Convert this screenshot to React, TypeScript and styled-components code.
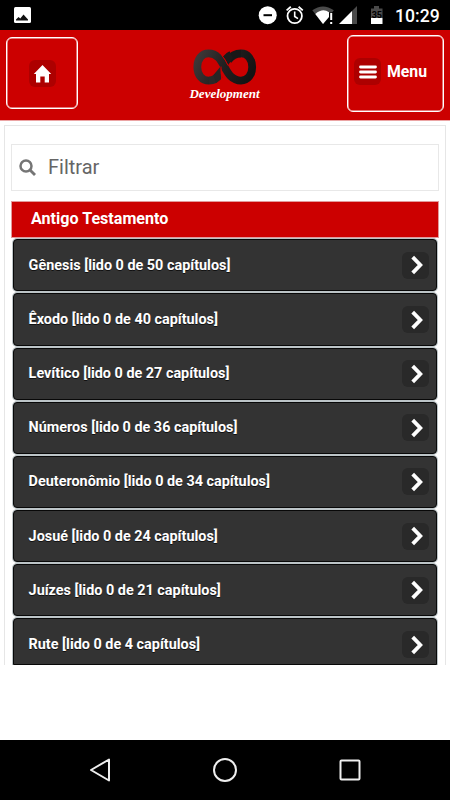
import React from 'react';
import styled, { createGlobalStyle } from 'styled-components';

const GlobalStyle = createGlobalStyle`
  * { box-sizing: border-box; }
  body { margin: 0; background: #fff; font-family: Roboto, sans-serif; }
`;

const Screen = styled.div`
  width: 450px;
  height: 800px;
  display: flex;
  flex-direction: column;
  overflow: hidden;
  background: #fff;
`;

const StatusBar = styled.div`
  height: 30px;
  flex: none;
  display: flex;
  align-items: center;
  background: #000;
  padding: 0 10px 0 13px;
`;

const StatusIcons = styled.svg`
  margin-left: auto;
  margin-right: 11px;
  display: block;
`;

const Clock = styled.span`
  color: #fff;
  font-size: 17.6px;
  font-weight: 500;
  line-height: 30px;
  padding-top: 1px;
  width: 45px;
  white-space: nowrap;
`;

const Header = styled.header`
  height: 91px;
  flex: none;
  display: flex;
  justify-content: space-between;
  align-items: flex-start;
  background: #c00;
  border-bottom: 1px solid #eba4a4;
  padding: 5px 6px 0;
`;

const HomeButton = styled.button`
  width: 72px;
  height: 72px;
  margin: 2px 0 0;
  padding: 0 0 0 1px;
  display: flex;
  align-items: center;
  justify-content: center;
  border: 1px solid #fff;
  box-shadow: inset 0 0 0 0.5px #fbe9e9;
  border-radius: 6px;
  background: transparent;
`;

const MenuButton = styled.button`
  width: 97px;
  height: 77px;
  margin: 0;
  padding: 0 0 4px 6px;
  display: flex;
  align-items: center;
  gap: 6px;
  border: 1px solid #fff;
  box-shadow: inset 0 0 0 0.5px #fbe9e9;
  border-radius: 6px;
  background: transparent;
  color: #fff;
  font: 700 15.8px Roboto, sans-serif;
`;

const IconDisc = styled.span<{ $tone: string }>`
  width: 27px;
  height: 27px;
  flex: none;
  display: grid;
  place-items: center;
  border-radius: 6px;
  background: ${(p) => p.$tone};
`;

const Brand = styled.div`
  width: 80px;
  margin: 13px 0 0 24px;
  display: flex;
  flex-direction: column;
  align-items: center;
`;

const BrandName = styled.span`
  color: #fff;
  font: italic 700 13px/14px "Liberation Serif", serif;
  margin-top: 1px;
`;

const Content = styled.main`
  height: 540px;
  flex: none;
  margin: 4px 4px 0;
  padding: 18px 6px 0;
  border: 1px solid #e6e6e6;
  border-bottom: 0;
  overflow: hidden;
`;

const SearchBox = styled.label`
  height: 47px;
  display: flex;
  align-items: center;
  gap: 12px;
  padding: 0 7px;
  margin: 0 0 10px;
  border: 1px solid #e8e8e8;
`;

const SearchInput = styled.input`
  border: 0;
  padding: 0 0 1px;
  outline: 0;
  width: 300px;
  background: none;
  font: 400 20px Roboto, sans-serif;
  &::placeholder { color: #666; opacity: 1; }
`;

const SectionTitle = styled.h2`
  height: 37px;
  margin: 0;
  padding: 0 0 2px 19px;
  background: #c00;
  border: 1px solid #e29a9a;
  color: #fff;
  font: 700 16.1px/33px Roboto, sans-serif;
`;

const BookList = styled.ul`
  list-style: none;
  margin: 0;
  padding: 1.3px 2px 0;
  display: flex;
  flex-direction: column;
  gap: 2px;
`;

const Book = styled.li<{ $cut: boolean }>`
  height: ${(p) => (p.$cut ? 46.5 : 52.15)}px;
  flex: none;
  display: flex;
  align-items: ${(p) => (p.$cut ? 'flex-start' : 'center')};
  justify-content: space-between;
  padding: ${(p) => (p.$cut ? '12px' : '0')} 7.5px 0 14.6px;
  border: 1px solid #080808;
  border-radius: ${(p) => (p.$cut ? '4px 4px 0 0' : '4px')};
  box-shadow: 0 0 0 1px #bcc4c7;
  background: #333;
`;

const BookLabel = styled.span`
  color: #fff;
  font: 700 14.4px/27px Roboto, sans-serif;
  text-shadow: 0 1px 0 #111;
`;

const NavBar = styled.nav`
  height: 60px;
  flex: none;
  margin-top: auto;
  display: flex;
  align-items: center;
  justify-content: center;
  gap: 100px;
  background: #000;
`;

const books: [string, number][] = [
  ['Gênesis', 50],
  ['Êxodo', 40],
  ['Levítico', 27],
  ['Números', 36],
  ['Deuteronômio', 34],
  ['Josué', 24],
  ['Juízes', 21],
  ['Rute', 4],
];

function StatusGlyphs() {
  return (
    <StatusIcons width="126" height="30" viewBox="258 0 126 30">
      <circle cx="267.700" cy="15.200" r="9" fill="#fff" />
      <path d="M263.500 15.200h8.500" stroke="#000" strokeWidth="2" />
      <g fill="none" stroke="#fff" strokeWidth="1.800">
        <circle cx="294.700" cy="16" r="7.200" />
        <path d="M294.700 11.500v5l3.300 2.200" strokeWidth="1.600" />
        <path d="M286.600 10.400l4.200-3.600M302.800 10.400l-4.200-3.600" />
      </g>
      <path d="M312.300 10.300Q323 2.500 333.800 10.300L323 24z" fill="#4a4a4a" />
      <path d="M315.300 14Q322.500 7.800 329 12.200V17L323 24z" fill="#fff" />
      <path d="M329 12.500h5V24h-5z" fill="#000" />
      <path d="M331.200 13v7M331.200 22v2" stroke="#fff" strokeWidth="2" />
      <path d="M352 11v13h-13z" fill="#fff" />
      <path d="M352 11l5-5v18h-5z" fill="#4a4a4a" />
      <path d="M371 8.500h3V6h5v2.500h3.500V18H371z" fill="#4a4a4a" />
      <path d="M371 18h11.500v6H371z" fill="#fff" />
      <text x="376.800" y="18" textAnchor="middle" fontSize="9" fontWeight="700" fontFamily="Roboto, sans-serif" fill="#000">35</text>
    </StatusIcons>
  );
}

function BrandMark() {
  return (
    <svg width="66" height="38" viewBox="192 48 66 38">
      <defs>
        <linearGradient id="ribbon" gradientUnits="userSpaceOnUse" x1="193" y1="48" x2="257" y2="80">
          <stop offset="0" stopColor="#453d3d" />
          <stop offset=".5" stopColor="#222020" />
          <stop offset="1" stopColor="#101010" />
        </linearGradient>
      </defs>
      <g fill="none">
        <path d="M209 80.600C213 80.600 217 78.500 220 74" stroke="#2b2828" strokeWidth="8" />
        <path d="M241 53.400C236 53.400 231.500 55.500 228 60.500" stroke="#191818" strokeWidth="8" />
        <path d="M214 52C225 58 222 80.600 236 80.600" stroke="#c00" strokeWidth="10" />
        <path
          d="M209 80.600C201.800 80.600 197.300 74.700 197.300 67C197.300 59.300 201.800 53.400 208.500 53.400C226 53.400 223 80.600 241 80.600C247.800 80.600 252.200 74.700 252.200 67C252.200 59.300 247.800 53.400 241 53.400"
          stroke="url(#ribbon)"
          strokeWidth="7.800"
        />
      </g>
      <path d="M213.500 75L220.500 66.500L221 78.500L216 83Z" fill="#282525" />
      <path d="M223 56.500Q225.500 53 229.500 51.200L233 58L228.200 65Q226 60 223 56.500Z" fill="#1c1a1a" />
      <path d="M221 66.500L221.600 79M221.800 55.500Q225.500 59.500 228 65.500" fill="none" stroke="#c00" strokeWidth="1" />
    </svg>
  );
}

export default function App() {
  return (
    <Screen>
      <GlobalStyle />
      <StatusBar>
        <svg width="19" height="18" viewBox="0 0 19 18">
          <rect x="1" y="1" width="17" height="16" rx="1.500" fill="#fff" />
          <path d="M3 14.500v-1l2.500-2.500 1.800 1.500 3.200-4 4.500 5v1z" fill="#111" />
        </svg>
        <StatusGlyphs />
        <Clock>10:29</Clock>
      </StatusBar>
      <Header>
        <HomeButton aria-label="Home">
          <IconDisc $tone="#ad0000">
            <svg width="19" height="19" viewBox="0 0 19 19">
              <path d="M9.500 1L18.200 10H16v8.500h-4.300v-6H7.300v6H3V10H.8z" fill="#fff" />
            </svg>
          </IconDisc>
        </HomeButton>
        <Brand>
          <BrandMark />
          <BrandName>Development</BrandName>
        </Brand>
        <MenuButton>
          <IconDisc $tone="#ad0000">
            <svg width="18" height="14" viewBox="0 0 18 14">
              <path d="M1.500 2h15M1.500 7h15M1.500 12h15" stroke="#fff" strokeWidth="2.800" strokeLinecap="round" />
            </svg>
          </IconDisc>
          Menu
        </MenuButton>
      </Header>
      <Content>
        <SearchBox>
          <svg width="17" height="17" viewBox="0 0 17 17" fill="none" stroke="#757575" strokeWidth="2.500">
            <circle cx="7" cy="7" r="5.500" />
            <path d="M11 11l5 5" strokeWidth="2.800" />
          </svg>
          <SearchInput placeholder="Filtrar" />
        </SearchBox>
        <SectionTitle>Antigo Testamento</SectionTitle>
        <BookList>
          {books.map(([name, chapters], index) => (
            <Book key={name} $cut={index === books.length - 1}>
              <BookLabel>{`${name} [lido 0 de ${chapters} capítulos]`}</BookLabel>
              <IconDisc $tone="#292929">
                <svg width="17" height="20" viewBox="0 0 17 20">
                  <path d="M5.700 2.200l7.600 7.800-7.600 7.800" fill="none" stroke="#fff" strokeWidth="3.800" />
                </svg>
              </IconDisc>
            </Book>
          ))}
        </BookList>
      </Content>
      <NavBar>
        <svg width="24" height="28" viewBox="0 0 24 28" fill="none" stroke="#eee" strokeWidth="2" strokeLinejoin="round">
          <path d="M21 3.500v21L3 14z" />
        </svg>
        <svg width="26" height="26" viewBox="0 0 26 26" fill="none" stroke="#eee" strokeWidth="2">
          <circle cx="13" cy="13" r="11" />
        </svg>
        <svg width="24" height="24" viewBox="0 0 24 24" fill="none" stroke="#eee" strokeWidth="2">
          <rect x="2.500" y="2.500" width="19" height="19" rx="1" />
        </svg>
      </NavBar>
    </Screen>
  );
}
